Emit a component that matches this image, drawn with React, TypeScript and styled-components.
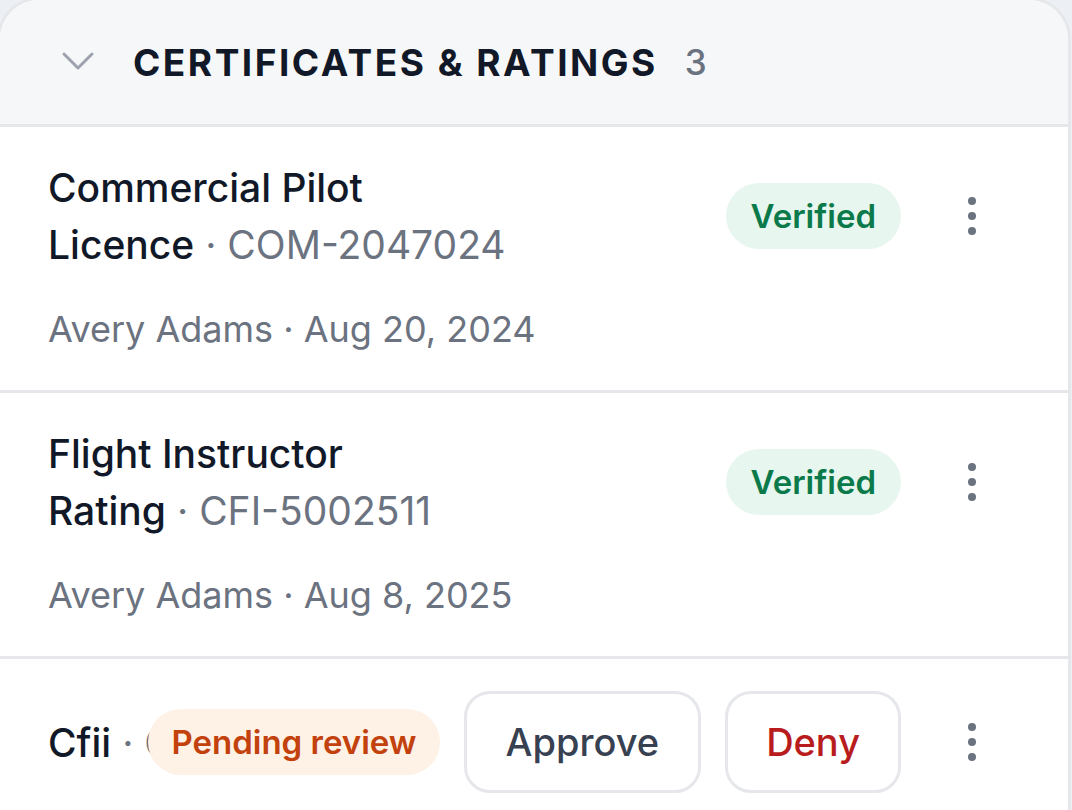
import React from "react";
import styled, { createGlobalStyle } from "styled-components";

const Global = createGlobalStyle`
  html, body { margin: 0; padding: 0; background: #eceff3; }
  body { font-family: Inter, "Noto Sans", "Liberation Sans", sans-serif; -webkit-font-smoothing: antialiased; }
  #root { overflow: hidden; height: 810px; }
`;

const Panel = styled.section`
  margin: -3px 0 0 -3px;
  width: 1074px;
  box-sizing: border-box;
  border: 3px solid #e5e7eb;
  border-bottom: none;
  border-radius: 42px 42px 0 0;
  background: #ffffff;
  overflow: hidden;
  min-height: 830px;
`;

const Header = styled.div`
  display: flex;
  align-items: center;
  height: 127px;
  box-sizing: border-box;
  padding: 0 0 0 54px;
  background: #f6f7f9;
  border-bottom: 3px solid #e5e7eb;
`;

const Chevron = styled.svg`
  width: 48px;
  height: 48px;
  margin-right: 31px;
  margin-top: -4px;
  flex-shrink: 0;
`;

const HeaderTitle = styled.h2`
  margin: 0;
  font-size: 37px;
  font-weight: 700;
  letter-spacing: 2.5px;
  color: #111827;
  text-transform: uppercase;
`;

const Count = styled.span`
  margin-left: 27px;
  font-size: 35px;
  font-weight: 500;
  color: #6b7280;
`;

const Row = styled.div`
  display: flex;
  flex-direction: column;
  gap: 28px;
  padding: 32px 72px 32px 48px;
  border-bottom: 3px solid #e5e7eb;
`;

const Top = styled.div`
  display: flex;
  align-items: center;
  gap: 24px;
`;

const Title = styled.div`
  flex: 1 1 400px;
  max-width: 400px;
  min-width: 0;
  font-size: 39px;
  line-height: 57px;
  font-weight: 500;
  color: #111827;
`;

const Chunk = styled.span`
  white-space: nowrap;
`;

const IdPart = styled.span`
  font-weight: 400;
  color: #6b7280;
`;

const Actions = styled.div`
  display: flex;
  align-items: center;
  gap: 24px;
  margin-left: auto;
  flex-shrink: 0;
`;

const Badge = styled.span<{ $tone: "green" | "orange" }>`
  display: inline-flex;
  align-items: center;
  height: 66px;
  padding: 0 ${(p) => (p.$tone === "green" ? "25px" : "23px")};
  border-radius: 33px;
  font-size: 33px;
  font-weight: 600;
  white-space: nowrap;
  background: ${(p) => (p.$tone === "green" ? "#e7f6ee" : "#fef1e6")};
  color: ${(p) => (p.$tone === "green" ? "#0b7a4b" : "#c2410c")};
`;

const Button = styled.button<{ $danger?: boolean }>`
  height: 102px;
  padding: 0 ${(p) => (p.$danger ? "38px" : "39px")};
  box-sizing: border-box;
  border: 3px solid #e5e7eb;
  border-radius: 26px;
  background: #ffffff;
  font-family: inherit;
  font-size: 38px;
  font-weight: 500;
  color: ${(p) => (p.$danger ? "#b91c1c" : "#374151")};
`;

const Kebab = styled.button`
  width: 48px;
  height: 48px;
  margin-left: 23px;
  padding: 0;
  border: none;
  background: transparent;
  display: flex;
  align-items: center;
  justify-content: center;
  flex-shrink: 0;
`;

const Meta = styled.div`
  font-size: 36px;
  line-height: 57px;
  color: #6b7280;
`;

type Cert = {
  name: string;
  id: string;
  who: string;
  date: string;
  pending?: boolean;
};

const certs: Cert[] = [
  { name: "Commercial Pilot Licence", id: "COM-2047024", who: "Avery Adams", date: "Aug 20, 2024" },
  { name: "Flight Instructor Rating", id: "CFI-5002511", who: "Avery Adams", date: "Aug 8, 2025" },
  { name: "Cfii", id: "CFII-3308417", who: "Avery Adams", date: "Sep 2, 2025", pending: true },
];

const Dots = () => (
  <svg width="12" height="40" viewBox="0 0 12 40">
    <circle cx="6" cy="5" r="4" fill="#6b7280" />
    <circle cx="6" cy="20" r="4" fill="#6b7280" />
    <circle cx="6" cy="35" r="4" fill="#6b7280" />
  </svg>
);

export default function App() {
  return (
    <>
      <Global />
      <Panel>
        <Header>
          <Chevron viewBox="0 0 24 24" fill="none" stroke="#9ca3af" strokeWidth="1.5" strokeLinecap="round" strokeLinejoin="round">
            <path d="M5 9l7 7 7-7" />
          </Chevron>
          <HeaderTitle>Certificates &amp; Ratings</HeaderTitle>
          <Count>3</Count>
        </Header>
        {certs.map((c) => {
          const words = c.name.split(" ");
          const last = words.pop();
          return (
            <Row key={c.id}>
              <Top>
                <Title>
                  {words.length ? words.join(" ") + " " : ""}
                  <Chunk>
                    {last}
                    <IdPart>{"\u00a0·\u00a0" + c.id}</IdPart>
                  </Chunk>
                </Title>
                <Actions>
                  {c.pending ? (
                    <>
                      <Badge $tone="orange">Pending review</Badge>
                      <Button>Approve</Button>
                      <Button $danger>Deny</Button>
                    </>
                  ) : (
                    <Badge $tone="green">Verified</Badge>
                  )}
                </Actions>
                <Kebab aria-label="More">
                  <Dots />
                </Kebab>
              </Top>
              <Meta>
                {c.who} · {c.date}
              </Meta>
            </Row>
          );
        })}
      </Panel>
    </>
  );
}
